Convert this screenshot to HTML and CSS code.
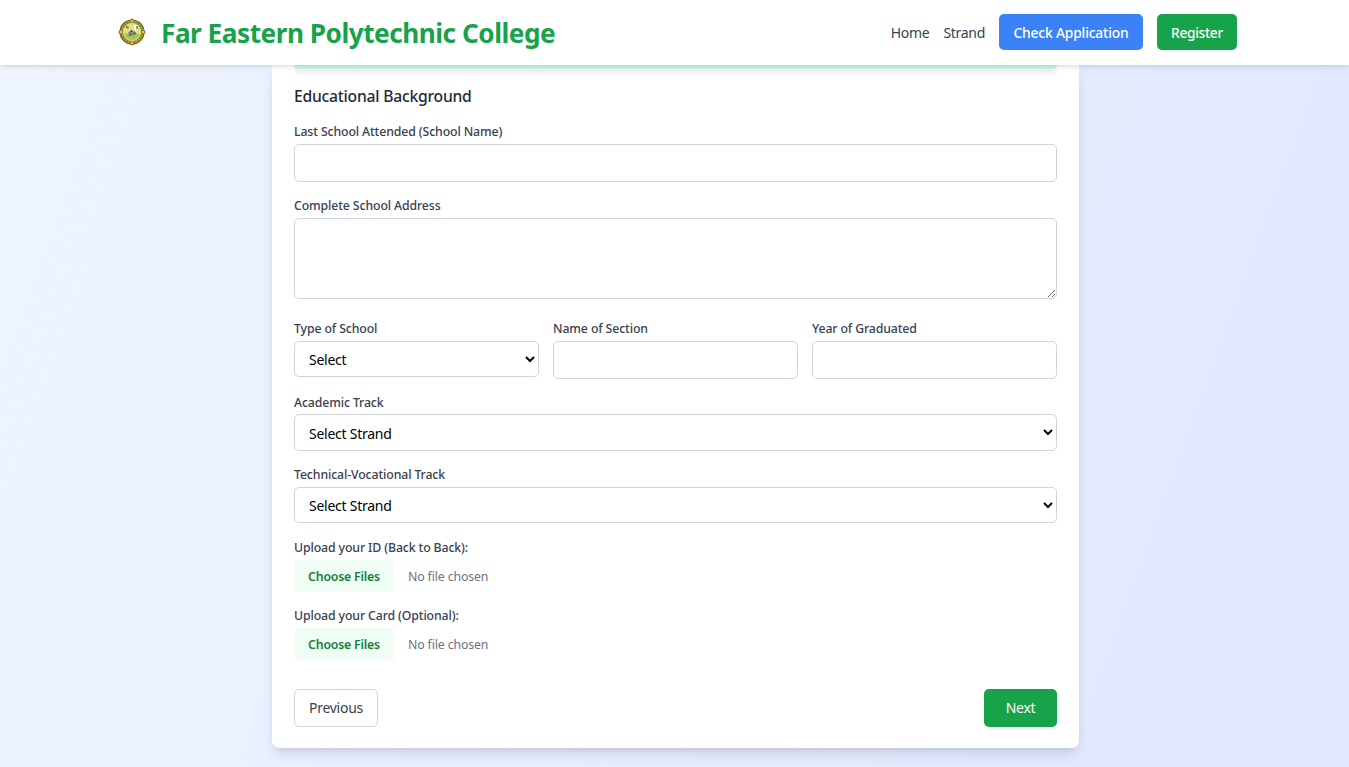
FILE: index.html
```html
<!DOCTYPE html>
<html lang="en">
<head>
<meta charset="utf-8">
<title>Far Eastern Polytechnic College</title>
<link rel="stylesheet" href="styles.css">
</head>
<body>
<header class="navbar">
  <div class="brand">
    <svg class="brand-logo" viewBox="0 0 28 28" aria-hidden="true">
      <path d="M14 .3 17 4h-6zM14 27.700 11 24h6zM.3 14 4 11v6zM27.700 14 24 17v-6z" fill="#b83a10"/>
      <circle cx="14" cy="14" r="12" fill="#d6b63a" stroke="#965019" stroke-width="1.200"/>
      <circle cx="14" cy="14" r="10.200" fill="none" stroke="#629239" stroke-width="2.300" stroke-dasharray="2.200 .6"/>
      <circle cx="14" cy="14" r="9" fill="#dfe087"/>
      <path d="M6 15.500c3-1 5.500 1 7.500 0s5.500-1 8.500 1c-1 3-4 5.500-8 5.500s-7-3.500-8-6.500z" fill="#a9c65b"/>
      <path d="M15.500 7.500h4.500v5h-3z" fill="#fff"/>
      <path d="m8 8.500 2.500 1.500" stroke="#d23b34" stroke-width="1.500"/>
      <path d="m10 14.500 3-2.500 1.500 2 2-1 1.500 2.500-2 2.500-3-.5-2 1.500z" fill="#858a85"/>
      <path d="M13 12.500h1.500V14H13zM18.500 8h1v3h-1zM12 16h1v1.300h-1zM16 14.500h1.300V16H16z" fill="#222d37"/>
      <path d="M13 2h2v2h-2zM13 24h2v2h-2zM2 13h2v2H2zM24 13h2v2h-2z" fill="#f1c62b"/>
    </svg>
    <span class="brand-name">Far Eastern Polytechnic College</span>
  </div>
  <nav class="nav-links">
    <a class="nav-link">Home</a>
    <a class="nav-link">Strand</a>
    <a class="nav-button nav-check">Check Application</a>
    <a class="nav-button nav-register">Register</a>
  </nav>
</header>
<main class="page">
  <form class="card">
    <div class="banner"></div>
    <h2 class="section-title">Educational Background</h2>
    <div class="field">
      <label class="label" for="school">Last School Attended (School Name)</label>
      <input class="control" id="school" type="text">
    </div>
    <div class="field field-address">
      <label class="label" for="address">Complete School Address</label>
      <textarea class="control control-area" id="address"></textarea>
    </div>
    <div class="field-row">
      <div class="field">
        <label class="label" for="type">Type of School</label>
        <select class="control control-select" id="type"><option>Select</option></select>
      </div>
      <div class="field">
        <label class="label" for="section">Name of Section</label>
        <input class="control" id="section" type="text">
      </div>
      <div class="field">
        <label class="label" for="year">Year of Graduated</label>
        <input class="control" id="year" type="text">
      </div>
    </div>
    <div class="field field-academic">
      <label class="label" for="academic">Academic Track</label>
      <select class="control control-select" id="academic"><option>Select Strand</option></select>
    </div>
    <div class="field field-techvoc">
      <label class="label" for="techvoc">Technical-Vocational Track</label>
      <select class="control control-select" id="techvoc"><option>Select Strand</option></select>
    </div>
    <div class="field">
      <label class="label" for="idfile">Upload your ID (Back to Back):</label>
      <input class="file" id="idfile" type="file" multiple>
    </div>
    <div class="field">
      <label class="label" for="cardfile">Upload your Card (Optional):</label>
      <input class="file" id="cardfile" type="file" multiple>
    </div>
    <div class="actions">
      <button class="button button-previous" type="button">Previous</button>
      <button class="button button-next" type="button">Next</button>
    </div>
  </form>
</main>
</body>
</html>
```
FILE: styles.css
```css
* { box-sizing: border-box; }

body {
  margin: 0;
  height: 767px;
  overflow: hidden;
  display: flex;
  flex-direction: column;
  font-family: "Noto Sans", "Open Sans", sans-serif;
  font-size: 14px;
  letter-spacing: -.25px;
  color: #1f2937;
  background: linear-gradient(110deg, #eef5ff, #e0e7ff);
}

.navbar {
  position: relative;
  z-index: 1;
  flex: none;
  height: 65px;
  padding: 0 112px 1px 118px;
  display: flex;
  align-items: center;
  justify-content: space-between;
  background: #fff;
  box-shadow: 0 3.600px 5.400px -1px rgba(0, 0, 0, .1), 0 1.800px 3.600px -2px rgba(0, 0, 0, .1);
}

.brand { display: flex; align-items: center; gap: 15px; }
.brand-logo { width: 28px; height: 28px; }
.brand-name {
  padding-top: 2px;
  font-size: 26.200px;
  line-height: 32px;
  font-weight: 700;
  letter-spacing: -.49px;
  color: #16a34a;
  white-space: nowrap;
}

.nav-links { display: flex; align-items: center; gap: 14px; white-space: nowrap; }
.nav-link { padding-top: 1px; color: #374151; letter-spacing: -.3px; }
.nav-button {
  height: 36px;
  padding-top: 1px;
  display: flex;
  align-items: center;
  justify-content: center;
  border-radius: 5px;
  color: #fff;
  font-size: 13.800px;
  font-weight: 500;
}
.nav-check { width: 144px; background: #3b82f6; letter-spacing: -.16px; }
.nav-register { width: 80px; background: #16a34a; letter-spacing: -.35px; }

.page { padding-left: 272px; }

.card {
  width: 807px;
  height: 683px;
  padding: 0 22px;
  border-radius: 0 0 7px 7px;
  background: #fff;
  box-shadow: 0 9px 14px -3px rgba(0, 0, 0, .1), 0 4px 6px -4px rgba(0, 0, 0, .1), 0 0 14px rgba(0, 0, 0, .03);
}

.banner {
  height: 4px;
  border-radius: 0 0 4px 4px;
  background: #c8f5ea;
  box-shadow: 0 3.600px 5.400px -1px rgba(0, 0, 0, .2), 0 1.800px 3.600px -2px rgba(0, 0, 0, .2);
}

.section-title {
  height: 25px;
  margin: 15px 0 13px;
  font-size: 15.700px;
  line-height: 25px;
  font-weight: 500;
  letter-spacing: -.23px;
}

.field { display: flex; flex-direction: column; gap: 4px; margin-bottom: 14px; }
.field-address { margin-bottom: 20px; }
.field-academic { gap: 3px; }
.field-techvoc { margin-bottom: 15px; }
.field-row { display: grid; grid-template-columns: repeat(3, 245px); gap: 14px; margin-bottom: 14px; }
.field-row .field { margin-bottom: 0; }

.label {
  height: 18px;
  padding-top: 1px;
  font-size: 12.300px;
  line-height: 18px;
  font-weight: 500;
  letter-spacing: -.12px;
  color: #374151;
  white-space: nowrap;
}

.control {
  display: block;
  width: 100%;
  height: 38px;
  margin: 0;
  padding: 7px 14px;
  border: 1px solid #d1d5db;
  border-radius: 5px;
  background-color: #fff;
  font: inherit;
  letter-spacing: inherit;
  color: #000;
}
.control-area { height: 81px; resize: vertical; }
.control-select { height: 36px; padding: 0 0 0 10px; }
.field-academic .control-select { height: 37px; padding-top: 2px; }

.file { height: 32px; width: 100%; font-family: inherit; font-size: 12.300px; letter-spacing: -.13px; color: #6b7280; }
.file::file-selector-button {
  width: 100px;
  height: 32px;
  margin: 0 14px 0 0;
  padding: 0;
  border: 0;
  border-radius: 4px;
  background: #f0fdf4;
  color: #15803d;
  font: inherit;
  font-weight: 600;
  letter-spacing: -.2px;
}

.actions { display: flex; justify-content: space-between; margin-top: 29px; }
.button { height: 38px; padding: 0 0 2px; border-radius: 5px; font: inherit; letter-spacing: inherit; }
.button-previous { width: 84px; border: 1px solid #d1d5db; background: #fff; color: #374151; }
.button-next { width: 73px; border: 0; background: #16a34a; color: #fff; }
```
